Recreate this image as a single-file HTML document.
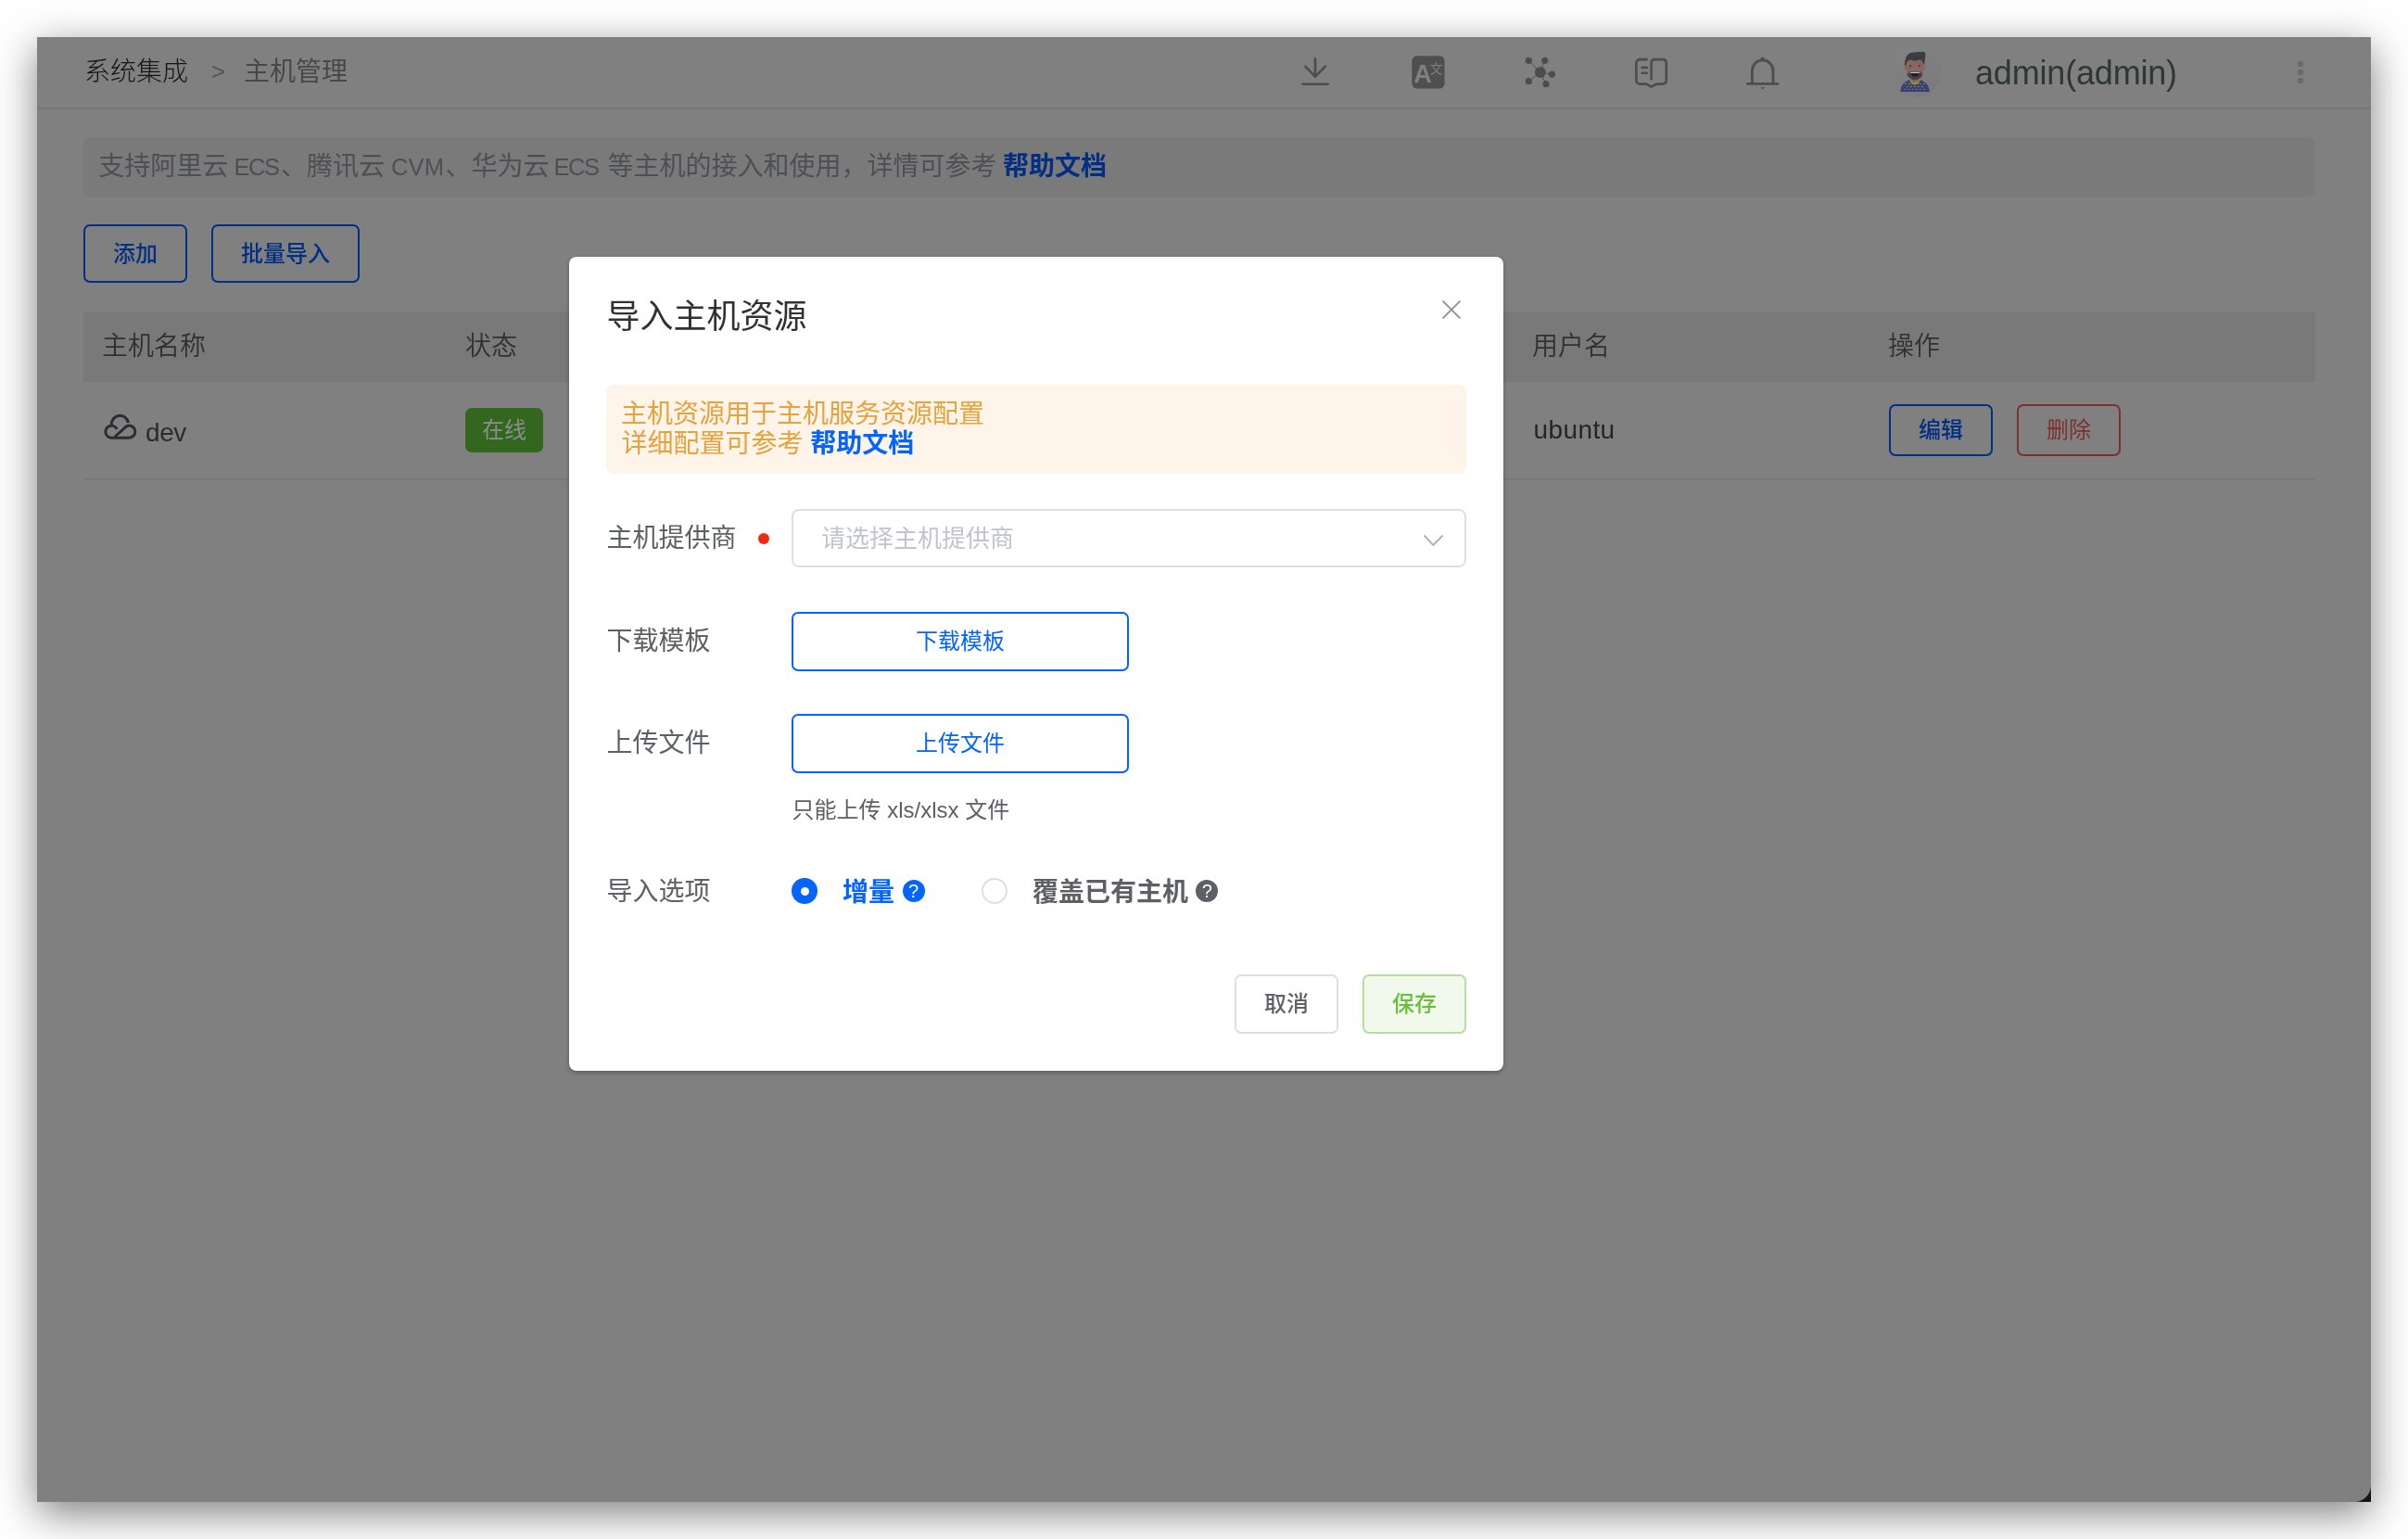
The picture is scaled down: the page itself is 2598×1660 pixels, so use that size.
<!DOCTYPE html>
<html lang="zh-CN">
<head>
<meta charset="utf-8">
<title>主机管理</title>
<style>
*{box-sizing:border-box;margin:0;padding:0}
html,body{width:2598px;height:1660px;overflow:hidden;background:#fff}
body{font-family:"Liberation Sans","Noto Sans CJK SC",sans-serif;position:relative;color:#303133}
.abs{position:absolute}
.t{position:absolute;white-space:nowrap;line-height:1}
#win{position:absolute;left:40px;top:40px;width:2518px;height:1580px;background:#808080;
  box-shadow:0 12px 42px rgba(0,0,0,.51);overflow:visible}
#corner{position:absolute;right:0;bottom:0;width:18px;height:18px;background:#0f1a0a}
#corner i{position:absolute;left:-18px;top:-18px;width:36px;height:36px;border-radius:18px;background:#808080;display:block}
#hline{left:40px;top:116px;width:2518px;height:2px;background:#747679}
.btn{position:absolute;border:2px solid #022f84;border-radius:7px;color:#022f84;font-size:24px;font-weight:500;
  display:flex;align-items:center;justify-content:center;white-space:nowrap;padding-bottom:4px}

.lab{font-size:28px;color:#5d6064}
.mbtn{width:364px;height:64px;border:2px solid #0364ff;border-radius:7px;color:#0364ff;font-size:24px;display:flex;align-items:center;justify-content:center;background:#fff;padding-bottom:5.5px}
.q{width:24px;height:24px;border-radius:12px;color:#fff;font-size:20px;font-weight:400;text-align:center;line-height:24px;font-family:"Liberation Sans",sans-serif}
.fbtn{width:112px;height:64px;border:2px solid;border-radius:7px;font-size:24px;font-weight:500;display:flex;align-items:center;justify-content:center;padding-bottom:6px}
.l{display:inline-block;font-size:25.5px;letter-spacing:-1.1px;text-align:left;white-space:pre}
#root{position:absolute;left:0;top:0;width:2598px;height:1660px;will-change:transform}
</style>
</head>
<body>
<div id="root">
<div id="win"><div id="corner"><i></i></div></div>

<!-- header -->
<div class="t" id="bc1" style="left:91px;top:64px;font-size:28px;font-weight:300;color:#141414">系统集成</div>
<div class="t" id="bc2" style="left:228px;top:64px;font-size:26px;color:#555">&gt;</div>
<div class="t" id="bc3" style="left:263px;top:64px;font-size:28px;color:#484848">主机管理</div>
<div class="abs" id="hline"></div>

<!-- notice -->
<div class="abs" id="notice" style="left:90px;top:148px;width:2408px;height:64px;border-radius:7px;background:#7a7a7a"></div>
<div class="t" id="ntext" style="left:106.3px;top:166px;font-size:28px;color:#4d4f53">支持阿里云<span class="l" style="width:56.7px;padding-left:0.4px;letter-spacing:-1.4px"> ECS</span>、腾讯云<span class="l" style="width:65.8px;margin-left:-0.3px;letter-spacing:0.2px"> CVM</span>、华为云<span class="l" style="width:63.8px;margin-left:-0.8px;letter-spacing:-1.4px"> ECS </span>等主机的接入和使用，详情可参考 <b style="color:#022f84;font-weight:700;margin-left:-1.3px">帮助文档</b></div>

<!-- buttons -->
<div class="btn" id="badd" style="left:90px;top:242px;width:112px;height:63px">添加</div>
<div class="btn" id="bimp" style="left:228px;top:242px;width:160px;height:63px">批量导入</div>

<!-- table -->
<div class="abs" id="thead" style="left:90px;top:336px;width:2408px;height:76px;background:#797979"></div>
<div class="t th" style="left:110px;top:360px;font-size:28px;font-weight:350;color:#2f3032">主机名称</div>
<div class="t th" style="left:502px;top:360px;font-size:28px;font-weight:350;color:#2f3032">状态</div>
<div class="t th" style="left:1653px;top:360px;font-size:28px;font-weight:350;color:#2f3032">用户名</div>
<div class="t th" style="left:2037px;top:360px;font-size:28px;font-weight:350;color:#2f3032">操作</div>
<div class="abs" id="rowline" style="left:90px;top:516px;width:2408px;height:2px;background:#767a7f"></div>

<div class="t" id="dev" style="left:157px;top:453px;font-size:28px;color:#2b2c2e;letter-spacing:-0.4px">dev</div>
<div class="abs" id="tag" style="left:502px;top:440px;width:84px;height:48px;border-radius:7px;background:#33661f;color:#8d8f8d;font-size:24px;display:flex;align-items:center;justify-content:center;padding-bottom:6px">在线</div>
<div class="t" id="ubuntu" style="left:1654.5px;top:450px;font-size:28px;color:#242527;letter-spacing:0.4px">ubuntu</div>
<div class="btn" id="bedit" style="left:2038px;top:436px;width:112px;height:56px;padding-bottom:6px">编辑</div>
<div class="btn" id="bdel" style="left:2176px;top:436px;width:112px;height:56px;padding-bottom:6px;border-color:#7c2f31;color:#7c2f31;font-weight:400">删除</div>

<!-- header icons -->
<svg class="abs" id="ic-dl" style="left:1400px;top:58px" width="40" height="40" viewBox="0 0 40 40" fill="none" stroke="#4d4d4d" stroke-width="2.6" stroke-linecap="round" stroke-linejoin="round">
  <path d="M19 4.2V24.6M7.6 12.9L19 24.6L30.6 12.9" stroke-linecap="butt" stroke-linejoin="miter"/><path d="M5.6 32.8H32.8"/>
</svg>
<svg class="abs" id="ic-tr" style="left:1523px;top:60px" width="36" height="36" viewBox="0 0 36 36">
  <rect x="0.3" y="0.3" width="35.3" height="35.3" rx="5.5" fill="#4f4f4f"/>
  <text x="2.2" y="29" font-family="Liberation Sans, sans-serif" font-weight="700" font-size="27" fill="#808080">A</text>
  <text x="19.8" y="19.4" font-family="Liberation Sans, Noto Sans CJK SC, sans-serif" font-size="13.6" fill="#808080">文</text>
</svg>
<svg class="abs" id="ic-net" style="left:1640px;top:58px" width="40" height="40" viewBox="0 0 40 40" fill="#4d4d4d" stroke="#4d4d4d" stroke-width="0.95">
  <path d="M21.8 19.9L9.3 7.3M21.8 19.9L26.7 7.3M21.8 19.9L34.4 22.2M21.8 19.9L9.3 29.7M21.8 19.9L28 32.6" fill="none"/>
  <circle cx="21.8" cy="19.9" r="6" stroke="none"/><circle cx="9.3" cy="7.3" r="3.6" stroke="none"/><circle cx="26.7" cy="7.3" r="3.6" stroke="none"/>
  <circle cx="34.4" cy="22.2" r="3.6" stroke="none"/><circle cx="9.3" cy="29.7" r="3.6" stroke="none"/><circle cx="28" cy="32.6" r="3.6" stroke="none"/>
</svg>
<svg class="abs" id="ic-book" style="left:1760px;top:58px" width="44" height="40" viewBox="0 0 44 40" fill="none" stroke="#4d4d4d" stroke-width="2.6" stroke-linecap="round" stroke-linejoin="round">
  <path d="M16.6 6.1H9.4Q5.4 6.1 5.4 10.1V28.6Q5.4 32.6 9.4 32.6H16.2L21.6 35.6L27 32.6H33.8Q37.8 32.6 37.8 28.6V10.1Q37.8 6.1 33.8 6.1H25.6Q21.6 6.1 21.6 10.1V27.2"/>
  <path d="M11.6 14.9H16.8M11.6 20.7H16.8"/>
</svg>
<svg class="abs" id="ic-bell" style="left:1880px;top:58px" width="44" height="40" viewBox="0 0 44 40" fill="none" stroke="#4d4d4d" stroke-width="2.8" stroke-linecap="round" stroke-linejoin="round">
  <path d="M5.4 32.3H38M10.4 32.3V18.2A11.3 11.3 0 0 1 33 18.2V32.3"/>
  <circle cx="21.7" cy="5.6" r="2.1" fill="#4d4d4d" stroke="none"/>
  <path d="M19.2 36.2H24.2L21.7 38.4Z" fill="#4d4d4d" stroke="none"/>
</svg>

<!-- avatar -->
<svg class="abs" id="avatar" style="left:2030px;top:44px" width="72" height="68" viewBox="0 0 1630 1539">
  <defs><linearGradient id="avg" x1="0.2" y1="0.1" x2="0.8" y2="0.95"><stop offset="0" stop-color="#818284"/><stop offset="1" stop-color="#7b7b7c"/></linearGradient>
  <clipPath id="avc"><circle cx="815" cy="763" r="634"/></clipPath></defs>
  <circle cx="815" cy="763" r="634" fill="url(#avg)"/>
  <g clip-path="url(#avc)">
    <path d="M455 1245Q470 1020 690 950H940Q1160 1020 1175 1245Z" fill="#37407b"/>
    <path d="M690 950Q700 1070 815 1075Q930 1070 940 950Z" fill="#9c8f33"/>
    <path d="M722 925H908V985Q815 1050 722 985Z" fill="#86675e"/>
    <g fill="#a39530"><rect x="565" y="1040" width="42" height="22"/><rect x="655" y="1040" width="42" height="22"/><rect x="925" y="1040" width="42" height="22"/><rect x="1015" y="1040" width="42" height="22"/>
    <rect x="610" y="1108" width="42" height="22"/><rect x="700" y="1108" width="42" height="22"/><rect x="790" y="1108" width="42" height="22"/><rect x="880" y="1108" width="42" height="22"/><rect x="970" y="1108" width="42" height="22"/>
    <path d="M565 1160L610 1195H570ZM655 1160L700 1195H660ZM745 1160L790 1195H750ZM835 1160L880 1195H840ZM925 1160L970 1195H930ZM1015 1160L1060 1195H1020Z"/></g>
    <ellipse cx="580" cy="655" rx="38" ry="55" fill="#8a6a62"/><ellipse cx="1050" cy="655" rx="38" ry="55" fill="#8a6a62"/>
    <path d="M608 460H1022V800Q1000 900 815 930Q630 900 608 800Z" fill="#86685f"/>
    <path d="M625 830Q660 790 690 745H940Q970 790 1005 830Q950 945 815 950Q680 945 625 830Z" fill="#404243"/>
    <path d="M700 762H930V792H700Z" fill="#bfc0c2"/>
    <path d="M715 795H915Q880 870 815 872Q750 870 715 795Z" fill="#1b1415"/>
    <path d="M770 815L800 845L835 815L815 860Z" fill="#c8373c"/>
    <circle cx="703" cy="615" r="26" fill="#3a4045"/><circle cx="925" cy="615" r="26" fill="#3a4045"/>
    <path d="M565 605Q570 350 700 295Q900 270 1040 268Q1090 300 1065 420L1040 605Q1020 520 965 470Q900 455 850 490Q790 500 740 470Q690 455 650 480Q610 520 600 605Z" fill="#3c3d3d"/>
  </g>
</svg>
<div class="t" id="uname" style="left:2131px;top:60.7px;font-size:36px;color:#2f3735;letter-spacing:-0.18px">admin(admin)</div>
<svg class="abs" id="vdots" style="left:2474px;top:62px" width="16" height="32" viewBox="0 0 16 32" fill="#696969"><circle cx="8" cy="6.9" r="3.1"/><circle cx="8" cy="16" r="3.1"/><circle cx="8" cy="25" r="3.1"/></svg>

<!-- cloud icon -->
<svg class="abs" id="cloud" style="left:110px;top:444px" width="42" height="34" viewBox="0 0 42 34" fill="none" stroke="#2b2c2e" stroke-width="3" stroke-linejoin="round">
  <path d="M16.2 18.9A6.5 6.5 0 1 0 10.3 28.2H29.2A6.6 6.6 0 0 0 29.2 15Q27.2 15 25.8 16.3L14 27"/><path d="M10.4 15A9.1 9.1 0 0 1 28.4 12"/>
</svg>

<!-- modal -->
<div class="abs" id="modal" style="left:614px;top:277px;width:1008px;height:878px;background:#fff;border-radius:8px;box-shadow:0 2px 5px rgba(0,0,0,.3)"></div>
<div class="t" id="mtitle" style="left:654.5px;top:323.5px;font-size:36px;color:#2f3133">导入主机资源</div>
<svg class="abs" id="mclose" style="left:1554px;top:322px" width="24" height="24" viewBox="0 0 24 24" fill="none" stroke="#8f9196" stroke-width="1.9" stroke-linecap="butt"><path d="M2.6 2.6L21.4 21.4M21.4 2.6L2.6 21.4"/></svg>

<div class="abs" id="alert" style="left:654px;top:415px;width:928px;height:96px;border-radius:8px;background:#fef4ea"></div>
<div class="t" id="al1" style="left:670px;top:433px;font-size:28px;color:#e6a23c">主机资源用于主机服务资源配置</div>
<div class="t" id="al2" style="left:670.5px;top:465px;font-size:28px;color:#e6a23c">详细配置可参考 <b style="color:#0364ff;font-weight:700">帮助文档</b></div>

<div class="t lab" id="lb1" style="left:654.5px;top:567px">主机提供商</div>
<div class="abs" id="reddot" style="left:818px;top:575px;width:12px;height:12px;border-radius:6px;background:#ee2a12"></div>
<div class="abs" id="select" style="left:854px;top:549px;width:728px;height:63px;border:2px solid #dcdfe6;border-radius:8px;background:#fff"></div>
<div class="t" id="ph" style="left:886px;top:568px;font-size:26px;color:#c0c4cc">请选择主机提供商</div>
<svg class="abs" id="chev" style="left:1532px;top:570px" width="28" height="24" viewBox="0 0 28 24" fill="none" stroke="#b0b3ba" stroke-width="2" stroke-linecap="round" stroke-linejoin="round"><path d="M5 8L14.4 18L24 8"/></svg>

<div class="t lab" id="lb2" style="left:654.5px;top:678px">下载模板</div>
<div class="mbtn abs" id="mb1" style="left:854px;top:660px">下载模板</div>
<div class="t lab" id="lb3" style="left:654.5px;top:787.5px">上传文件</div>
<div class="mbtn abs" id="mb2" style="left:854px;top:770px">上传文件</div>
<div class="t" id="hint" style="left:854.5px;top:862px;font-size:24px;color:#5d6064">只能上传 xls/xlsx 文件</div>

<div class="t lab" id="lb4" style="left:654.5px;top:948px">导入选项</div>
<div class="abs" id="r1" style="left:854px;top:947px;width:28px;height:28px;border-radius:14px;background:#0364ff"></div>
<div class="abs" id="r1d" style="left:863.5px;top:956.5px;width:9px;height:9px;border-radius:5px;background:#fff"></div>
<div class="t" id="rt1" style="left:909px;top:948.5px;font-size:28px;font-weight:700;color:#0364ff">增量</div>
<div class="q abs" id="q1" style="left:973.5px;top:948.7px;background:#0364ff">?</div>
<div class="abs" id="r2" style="left:1059px;top:947px;width:28px;height:28px;border-radius:14px;border:2px solid #dcdfe6;background:#fff"></div>
<div class="t" id="rt2" style="left:1114px;top:948.5px;font-size:28px;font-weight:700;color:#5d6064">覆盖已有主机</div>
<div class="q abs" id="q2" style="left:1290.3px;top:948.7px;background:#5d6064">?</div>

<div class="abs fbtn" id="bcancel" style="left:1332px;top:1051px;border-color:#dcdfe6;color:#606266;background:#fff">取消</div>
<div class="abs fbtn" id="bsave" style="left:1470px;top:1051px;border-color:#b3e19d;color:#67c23a;background:#f0f9eb">保存</div>

</div>
</body>
</html>
